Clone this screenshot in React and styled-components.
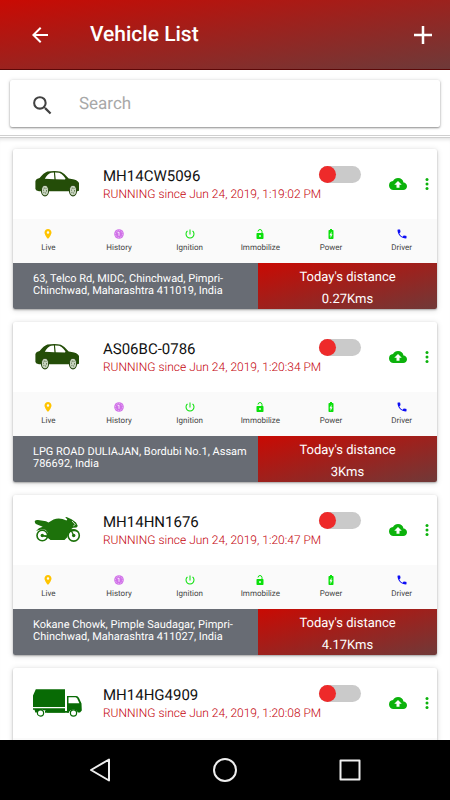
import React from "react";
import styled, { createGlobalStyle } from "styled-components";
import {
  MdArrowBack,
  MdBatteryChargingFull,
  MdCloudUpload,
  MdLocationOn,
  MdPhone,
  MdPowerSettingsNew,
  MdSearch,
} from "react-icons/md";

const GlobalStyle = createGlobalStyle`
  *, *::before, *::after { box-sizing: border-box; }
  body {
    margin: 0;
    background: #fff;
    font-family: Roboto, "Noto Sans", sans-serif;
    text-rendering: geometricPrecision;
  }
  button, input { font: inherit; text-rendering: inherit; }
`;

const redGradient = "linear-gradient(to bottom right, #c90a03, #6e3a39)";

const Screen = styled.div`
  display: flex;
  flex-direction: column;
  height: 100vh;
  background: #fff;
`;

const Header = styled.header`
  display: flex;
  align-items: center;
  flex: none;
  height: 70px;
  padding: 0 18px 0 28px;
  background: ${redGradient};
  border-bottom: 1px solid #5c0808;
  color: #fff;
`;

const IconButton = styled.button`
  display: inline-flex;
  align-items: center;
  justify-content: center;
  flex: none;
  padding: 0;
  border: 0;
  background: none;
  color: ${(p) => p.$color || "inherit"};
  cursor: pointer;
`;

const Title = styled.h1`
  flex: 1;
  margin: 0 0 0 38px;
  font-size: 21px;
  line-height: 28px;
  font-weight: 500;
`;

const SearchArea = styled.div`
  flex: none;
  padding: 10px 10px 8px;
  border-bottom: 3px double #cfcfcf;
`;

const SearchBox = styled.label`
  display: flex;
  align-items: center;
  gap: 24px;
  height: 47px;
  padding: 0 20px;
  border-radius: 2px;
  background: #fff;
  box-shadow: 0 1px 2px rgba(0, 0, 0, 0.4), 0 0 4px rgba(0, 0, 0, 0.12);
  color: #424242;

  svg {
    flex: none;
    margin-top: 4px;
  }
`;

const SearchInput = styled.input`
  flex: 1;
  min-width: 0;
  padding: 0;
  border: 0;
  outline: 0;
  background: none;
  font-size: 17px;
  line-height: 24px;
  color: #222;

  &::placeholder {
    color: #a8a8a8;
    opacity: 1;
  }
`;

const List = styled.main`
  flex: 1;
  min-height: 0;
  overflow: hidden;
  display: flex;
  flex-direction: column;
  gap: 13px;
  padding: 11px 13px 0;
  box-shadow: inset 0 4px 4px -3px rgba(0, 0, 0, 0.14);
`;

const Card = styled.article`
  flex: none;
  border-radius: 2px;
  background: #fff;
  box-shadow: 0 1px 2px rgba(0, 0, 0, 0.3), 0 1px 6px rgba(0, 0, 0, 0.14);
  overflow: hidden;
`;

const Summary = styled.div`
  display: flex;
  align-items: center;
  height: 70px;
  padding: 0 8px 0 20px;
`;

const Picture = styled.div`
  flex: none;
  display: flex;
  width: 70px;
  height: 36px;
`;

const Details = styled.div`
  flex: 1;
  min-width: 0;
`;

const TopLine = styled.div`
  display: flex;
  justify-content: space-between;
  align-items: flex-start;
  height: 20px;
  padding: 1px 28px 0 0;
`;

const Plate = styled.h2`
  margin: 0;
  font-size: 15px;
  line-height: 20px;
  font-weight: 400;
  color: #111;
`;

const Status = styled.p`
  margin: 0;
  font-size: 12px;
  font-weight: 300;
  line-height: 18px;
  color: #c4000a;
  white-space: nowrap;
`;

const Toggle = styled.input`
  appearance: none;
  flex: none;
  display: flex;
  width: 42px;
  height: 17px;
  margin: 0;
  border-radius: 9px;
  background: #cacaca;
  cursor: pointer;

  &::before {
    content: "";
    width: 17px;
    height: 17px;
    border-radius: 50%;
    background: #ee2a2a;
  }

  &:checked {
    justify-content: flex-end;
  }
`;

const RowTools = styled.div`
  display: flex;
  align-items: center;
  gap: 18px;
`;

const Actions = styled.div`
  display: grid;
  grid-template-columns: repeat(6, 1fr);
  height: 44px;
  background: #fafafa;
`;

const Action = styled.button`
  display: flex;
  flex-direction: column;
  align-items: center;
  gap: 3px;
  padding: 9px 0 0;
  border: 0;
  background: none;
  color: #444;
  font-size: 8px;
  line-height: 10px;
  cursor: pointer;

  svg {
    color: ${(p) => p.$tint};
  }
`;

const Footer = styled.div`
  display: grid;
  grid-template-columns: 245fr 179fr;
  height: 46px;
`;

const Address = styled.address`
  padding: 10px 4px 0 20px;
  background: #686c74;
  color: #fff;
  font-size: 11px;
  line-height: 12px;
  font-style: normal;
`;

const Distance = styled.div`
  padding-top: 4px;
  background: ${redGradient};
  color: #fff;
  font-size: 13px;
  line-height: 22px;
  text-align: center;
`;

const SystemBar = styled.nav`
  display: flex;
  align-items: center;
  justify-content: center;
  gap: 101px;
  flex: none;
  height: 60px;
  background: #000;
  color: #eee;
`;

function Plus() {
  return (
    <svg width="18" height="18" viewBox="0 0 18 18" aria-hidden="true">
      <path fill="none" stroke="currentColor" strokeWidth="2.500" d="M9 0v18M0 9h18" />
    </svg>
  );
}

function MoreDots() {
  return (
    <svg width="4" height="12" viewBox="0 0 4 12" fill="currentColor" aria-hidden="true">
      <circle cx="2" cy="1.500" r="1.500" />
      <circle cx="2" cy="6" r="1.500" />
      <circle cx="2" cy="10.500" r="1.500" />
    </svg>
  );
}

function Car() {
  return (
    <svg width="46" height="36" viewBox="0 2 46 33" preserveAspectRatio="none" aria-hidden="true">
      <path
        fill="#244d08"
        d="M3.500 24.500 2.400 23V16q.2-1.600 2-2.300l2.200-.6q4-4.700 7.800-6 7.700-1.300 13.500.2 4 1.700 7.800 6.100 6.300.5 9.200 2.700 1.900 1.700 1.800 5.600v2.800l-2.200.6H6z"
      />
      <path
        fill="#fff"
        d="M11.800 13.700q2.800-4.500 6.300-5.500l2.800-.2.500 6.100zM22 8q4.700-.1 6.500 1.300 2.300 1.700 4 4.200l-.5.800-9.300-.1z"
      />
      <g fill="#c9d5c0" stroke="#26460f" strokeWidth="1">
        <ellipse cx="12" cy="24.500" rx="3.600" ry="4.900" />
        <ellipse cx="40" cy="24.500" rx="3.600" ry="4.900" />
      </g>
      <g fill="none" stroke="#6b805b" strokeDasharray="1 1">
        <ellipse cx="12" cy="24.500" rx="1.500" ry="2.500" />
        <ellipse cx="40" cy="24.500" rx="1.500" ry="2.500" />
      </g>
    </svg>
  );
}

function Motorcycle() {
  return (
    <svg width="50" height="36" viewBox="0 0 50 36" aria-hidden="true">
      <g fill="#fff" stroke="#1d720b" strokeWidth="1.600">
        <circle cx="9.300" cy="23.500" r="5.300" />
        <circle cx="40.700" cy="23.500" r="5.600" />
      </g>
      <circle cx="9.300" cy="23.500" r="1.700" fill="#1d720b" />
      <circle cx="40.700" cy="23.500" r="1.700" fill="#1d720b" />
      <path
        fill="#1d720b"
        d="M1.700 9.200Q2.500 7.800 5 8L13 9.200 15.500 10.500 20.500 7.500Q25 5.600 29.500 7L33.500 8.500 34.300 7.200 32.200 5.600 33.500 5 38.500 7.200 43 10.500 44.800 14 43.500 15.500 40 15.800 38 17.200Q43.500 16.800 46 20.200 41 18.500 37.500 20 35 21.500 34 25.500L31.500 28H17.500L14 25.300 9.500 24.500V22.900L15 23.200Q15.300 20 12.300 17.800 7.500 16.600 3 19 5.500 15.500 9.700 14.700L3.500 12.300Q1.700 11.500 1.700 9.200z"
      />
      <path fill="none" stroke="#1d720b" strokeWidth="1.300" d="m37 16 3.700 7.500" />
      <path fill="none" stroke="#fff" strokeWidth=".8" d="m39 9 3.300 3.500-2 1.500" />
    </svg>
  );
}

function Truck() {
  return (
    <svg width="50" height="36" viewBox="0 0 50 36" aria-hidden="true">
      <path
        fill="#086b05"
        d="M2.800 4.300H32v17.700H0V10.500zM0 23.300h32v4.200H14.300q-1.500-2.500-5-2.800-3.500 0-5.300 2.800H2.300L1.500 24.700H0zM34 11h9.200q1.800.2 2.800 2l2.500 5.500.3 7-1.800 2h-2.200q-1.300-3-4.600-3-3.200.2-4.600 3H34z"
      />
      <path fill="#fff" d="M35.500 12.300h7q1 .1 1.700 1.300l2.200 4.700H35.500z" />
      <g fill="#fff" stroke="#086b05" strokeWidth="1.200">
        <circle cx="7.500" cy="28" r="3.100" />
        <circle cx="40.500" cy="28" r="3.100" />
      </g>
      <path fill="#086b05" d="M12 26h24v1.800H12z" />
    </svg>
  );
}

function HistoryClock() {
  return (
    <svg width="12" height="12" viewBox="0 0 12 12" aria-hidden="true">
      <circle cx="6" cy="6" r="4.800" fill="#d070e8" />
      <circle cx="6" cy="6" r="3.500" fill="none" stroke="#f3d3fa" strokeWidth=".8" strokeDasharray=".8 1" />
      <path d="M4.600 4.600 6 4.200v3.600" fill="none" stroke="#fff" strokeWidth=".8" />
    </svg>
  );
}

function OpenLock() {
  return (
    <svg width="12" height="12" viewBox="0 0 12 12" aria-hidden="true">
      <rect x="2.500" y="5" width="7" height="6" rx=".7" fill="currentColor" />
      <path d="M4 3.500Q4.200 1.500 6 1.500T8 3.500V5.500" fill="none" stroke="currentColor" strokeWidth="1" />
      <circle cx="6" cy="8" r=".9" fill="#fff" />
    </svg>
  );
}

const pictures = { car: Car, bike: Motorcycle, truck: Truck };

const actions = [
  { label: "Live", Icon: MdLocationOn, tint: "#ffc400" },
  { label: "History", Icon: HistoryClock, tint: "#d070e8" },
  { label: "Ignition", Icon: MdPowerSettingsNew, tint: "#0be00b" },
  { label: "Immobilize", Icon: OpenLock, tint: "#0be00b" },
  { label: "Power", Icon: MdBatteryChargingFull, tint: "#0be00b" },
  { label: "Driver", Icon: MdPhone, tint: "#0c0cf5" },
];

const vehicles = [
  {
    plate: "MH14CW5096",
    kind: "car",
    since: "Jun 24, 2019, 1:19:02 PM",
    address: "63, Telco Rd, MIDC, Chinchwad, Pimpri-Chinchwad, Maharashtra 411019, India",
    distance: "0.27Kms",
  },
  {
    plate: "AS06BC-0786",
    kind: "car",
    since: "Jun 24, 2019, 1:20:34 PM",
    address: "LPG ROAD DULIAJAN, Bordubi No.1, Assam 786692, India",
    distance: "3Kms",
  },
  {
    plate: "MH14HN1676",
    kind: "bike",
    since: "Jun 24, 2019, 1:20:47 PM",
    address: "Kokane Chowk, Pimple Saudagar, Pimpri-Chinchwad, Maharashtra 411027, India",
    distance: "4.17Kms",
  },
  {
    plate: "MH14HG4909",
    kind: "truck",
    since: "Jun 24, 2019, 1:20:08 PM",
  },
];

function VehicleCard({ vehicle }) {
  const VehiclePicture = pictures[vehicle.kind];
  return (
    <Card>
      <Summary>
        <Picture>
          <VehiclePicture />
        </Picture>
        <Details>
          <TopLine>
            <Plate>{vehicle.plate}</Plate>
            <Toggle type="checkbox" role="switch" aria-label={`Switch ${vehicle.plate}`} />
          </TopLine>
          <Status>RUNNING since {vehicle.since}</Status>
        </Details>
        <RowTools>
          <IconButton type="button" aria-label="Upload" $color="#0cb20c">
            <MdCloudUpload size={18} />
          </IconButton>
          <IconButton type="button" aria-label="More" $color="#0cb20c">
            <MoreDots />
          </IconButton>
        </RowTools>
      </Summary>
      <Actions>
        {vehicle.address &&
          actions.map(({ label, Icon, tint }) => (
            <Action key={label} type="button" $tint={tint}>
              <Icon size={12} />
              {label}
            </Action>
          ))}
      </Actions>
      {vehicle.address && (
        <Footer>
          <Address>{vehicle.address}</Address>
          <Distance>
            <div>Today's distance</div>
            <div>{vehicle.distance}</div>
          </Distance>
        </Footer>
      )}
    </Card>
  );
}

export default function App() {
  return (
    <>
      <GlobalStyle />
      <Screen>
        <Header>
          <IconButton type="button" aria-label="Back">
            <MdArrowBack size={24} />
          </IconButton>
          <Title>Vehicle List</Title>
          <IconButton type="button" aria-label="Add vehicle">
            <Plus />
          </IconButton>
        </Header>
        <SearchArea>
          <SearchBox>
            <MdSearch size={25} aria-hidden="true" />
            <SearchInput type="search" placeholder="Search" aria-label="Search vehicles" />
          </SearchBox>
        </SearchArea>
        <List>
          {vehicles.map((vehicle) => (
            <VehicleCard key={vehicle.plate} vehicle={vehicle} />
          ))}
        </List>
        <SystemBar aria-label="System">
          <IconButton type="button" aria-label="System back">
            <svg width="24" height="26" viewBox="0 0 24 26" fill="none" stroke="currentColor" strokeWidth="2" strokeLinejoin="round">
              <path d="M21 2.500v21L3 13z" />
            </svg>
          </IconButton>
          <IconButton type="button" aria-label="Home">
            <svg width="24" height="26" viewBox="0 0 24 26" fill="none" stroke="currentColor" strokeWidth="2">
              <circle cx="12" cy="13" r="11" />
            </svg>
          </IconButton>
          <IconButton type="button" aria-label="Recent apps">
            <svg width="24" height="26" viewBox="0 0 24 26" fill="none" stroke="currentColor" strokeWidth="2" strokeLinejoin="round">
              <rect x="2.500" y="3.500" width="19" height="19" />
            </svg>
          </IconButton>
        </SystemBar>
      </Screen>
    </>
  );
}
